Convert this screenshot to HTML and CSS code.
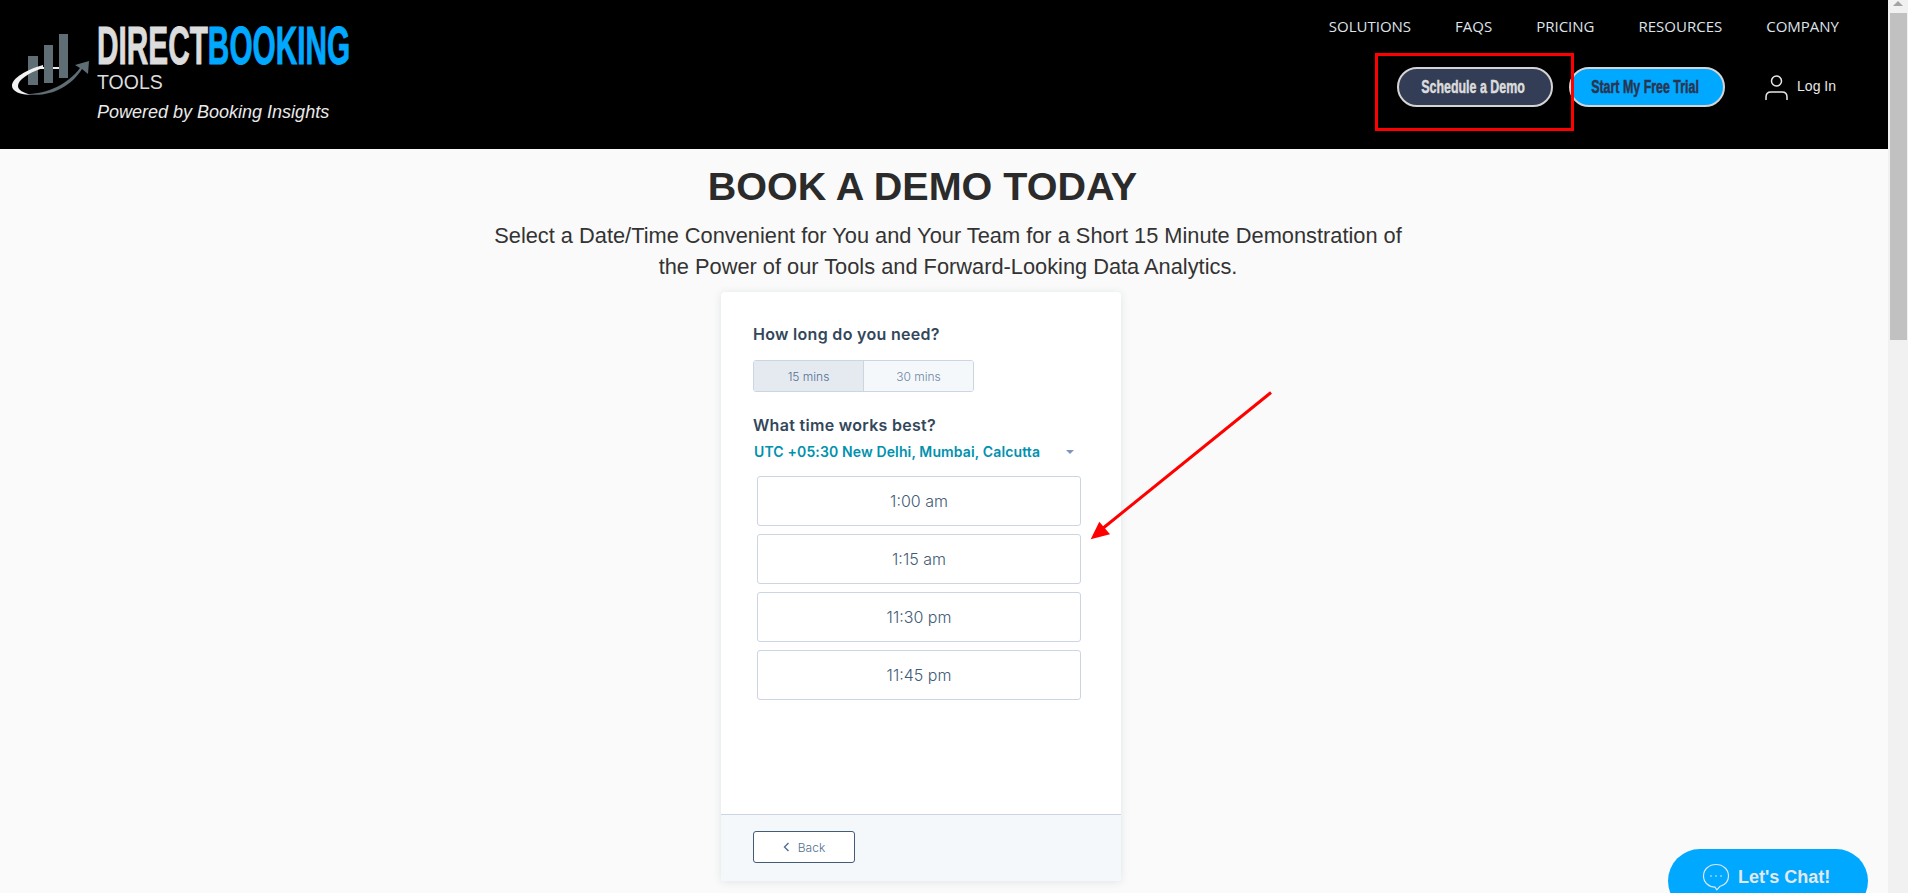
FILE: index.html
```html
<!DOCTYPE html>
<html lang="en">
<head>
  <meta charset="UTF-8">
  <meta name="viewport" content="width=device-width, initial-scale=1.0">
  <title>Book a Demo - Direct Booking Tools</title>
  <link rel="stylesheet" href="styles.css">
</head>
<body>
  <div class="page">
    <header class="site-header">
      <a href="#" class="brand">
        <svg class="brand-mark" width="97" height="90" viewBox="0 0 97 90">
          <path d="M28 46h10v29H28zM44 35h9v38h-9zM59 24h9v44h-9z" fill="#5f6d75"/>
          <path d="M38 57h6v2h-6zM53 57h6v2h-6z" fill="#eee"/>
          <path d="M43 55C26 60 12 68 12 76c0 5 8 9 20 9-9-2-14-5-14-9 0-6 10-13 25-18z" fill="#f2f2f2"/>
          <path d="M26 84c22 4 44-6 56-25l6 5 1-13-14 4 5 3C68 74 48 84 26 84z" fill="#5f6d75"/>
        </svg>
        <div class="brand-text">
          <div class="wordmark">DIRECT<span class="wordmark-blue">BOOKING</span></div>
          <div class="brand-sub">TOOLS</div>
          <div class="brand-tag">Powered by Booking Insights</div>
        </div>
      </a>
      <div class="header-right">
        <nav class="main-nav">
          <a href="#">SOLUTIONS</a>
          <a href="#">FAQS</a>
          <a href="#">PRICING</a>
          <a href="#">RESOURCES</a>
          <a href="#">COMPANY</a>
        </nav>
        <div class="header-actions">
          <a href="#" class="pill pill-dark"><span>Schedule a Demo</span></a>
          <a href="#" class="pill pill-blue"><span>Start My Free Trial</span></a>
          <a href="#" class="login">
            <svg width="23" height="25" viewBox="0 0 23 25" fill="none" stroke="#e8e8e8" stroke-width="1.5">
              <circle cx="11.500" cy="6" r="5"/>
              <path d="M1 25v-3c0-3 2-5 5-5h11c3 0 5 2 5 5v3"/>
            </svg>
            <span>Log In</span>
          </a>
        </div>
      </div>
    </header>

    <main class="content">
      <h1>BOOK A DEMO TODAY</h1>
      <p class="intro">Select a Date/Time Convenient for You and Your Team for a Short 15 Minute Demonstration of the Power of our Tools and Forward-Looking Data Analytics.</p>

      <section class="card">
        <div class="card-body">
          <h2 class="card-label">How long do you need?</h2>
          <div class="toggle">
            <button class="toggle-item active">15 mins</button>
            <button class="toggle-item">30 mins</button>
          </div>
          <h2 class="card-label time-label">What time works best?</h2>
          <div class="timezone">
            <span>UTC +05:30 New Delhi, Mumbai, Calcutta</span>
            <i class="caret"></i>
          </div>
          <div class="slots">
            <button class="slot">1:00 am</button>
            <button class="slot">1:15 am</button>
            <button class="slot">11:30 pm</button>
            <button class="slot">11:45 pm</button>
          </div>
        </div>
        <div class="card-footer">
          <button class="back-btn">
            <svg width="7" height="10" viewBox="0 0 7 10" fill="none" stroke="#516f90" stroke-width="1.4"><path d="M5.500 1 1.500 5l4 4"/></svg>
            Back
          </button>
        </div>
      </section>
    </main>

    <a href="#" class="chat-btn">
      <svg width="28" height="28" viewBox="0 0 28 28" fill="none" stroke="#dfe6ec" stroke-width="1.2">
        <path d="M14 1.500C7 1.500 1.500 6.500 1.500 13S7 24 13 24.200l1.800 2.600 3-3.300C23 22 26.500 18 26.500 13 26.500 6.500 21 1.500 14 1.500z"/>
        <path d="M8.500 13h1M13.500 13h1M18.500 13h1" stroke-width="1.800"/>
      </svg>
      Let's Chat!
    </a>

    <!-- annotations drawn over the screenshot -->
    <div class="mark-box"></div>
    <svg class="mark-arrow" width="190" height="155" viewBox="0 0 190 155">
      <path d="M184 1.500 15 138" stroke="#f00" stroke-width="3" fill="none"/>
      <path d="M3.700 148.300 12.300 130.700 23 143.300z" fill="#f00"/>
    </svg>
  </div>

  <div class="scrollbar">
    <div class="scroll-up"></div>
    <div class="scroll-thumb"></div>
  </div>
</body>
</html>
```

FILE: styles.css
```css
* {
  box-sizing: border-box;
}
html, body {
  height: 100%;
}
body {
  margin: 0;
  display: flex;
  overflow: hidden;
  background-color: #fafafa;
  font-family: 'Liberation Sans', Arial, sans-serif;
  color: #2b2b2b;
}
a {
  text-decoration: none;
}
.page {
  position: relative;
  flex: 1;
  min-width: 0;
  height: 100%;
  overflow: hidden;
}

/* header */
.site-header {
  height: 149px;
  background-color: #000;
  display: flex;
  justify-content: space-between;
}
.brand {
  display: flex;
}
.brand-mark {
  margin-top: 10px;
  flex-shrink: 0;
}
.brand-text {
  padding-top: 27px;
}
.wordmark {
  font-size: 53px;
  line-height: 38px;
  font-weight: bold;
  color: #dcdcdc;
  white-space: nowrap;
  width: 252px;
  -webkit-text-stroke: 1px currentColor;
  transform: scaleX(0.562);
  transform-origin: left;
}
.wordmark-blue {
  color: #00a8ff;
}
.brand-sub {
  margin-top: 6px;
  font-size: 19.500px;
  line-height: 22px;
  color: #dcdcdc;
}
.brand-tag {
  margin-top: 8px;
  font-size: 18px;
  line-height: 22px;
  font-style: italic;
  color: #eaeaea;
  white-space: nowrap;
}
.header-right {
  padding-right: 49px;
  display: flex;
  flex-direction: column;
  align-items: flex-end;
}
.main-nav {
  display: flex;
  gap: 44px;
  margin-top: 16px;
}
.main-nav a {
  font-family: 'Open Sans', sans-serif;
  font-size: 15px;
  line-height: 20px;
  color: #dfe3e8;
}
.header-actions {
  display: flex;
  align-items: center;
  margin-top: 31px;
}
.pill {
  width: 156px;
  height: 40px;
  padding-right: 4px;
  border: 2px solid #d4d4d4;
  border-radius: 20px;
  display: flex;
  align-items: center;
  justify-content: center;
  font-size: 18px;
  font-weight: bold;
  white-space: nowrap;
}
.pill span {
  display: inline-block;
  -webkit-text-stroke: 0.5px currentColor;
  transform: scaleX(0.69);
}
.pill-dark {
  background-color: #333d55;
  color: #dcdcdc;
}
.pill-blue {
  margin-left: 16px;
  background-color: #00a8ff;
  color: #2b3550;
}
.login {
  display: flex;
  align-items: flex-start;
  gap: 9px;
  margin-left: 40px;
  margin-right: 3px;
  color: #e8e8e8;
  font-size: 14px;
  line-height: 20px;
  white-space: nowrap;
}
.login span {
  margin-top: 1px;
}

/* main */
.content {
  display: flex;
  flex-direction: column;
  align-items: center;
  width: 1842px;
}
.content h1 {
  margin: 15px 0 0 3px;
  font-size: 39.500px;
  line-height: 45px;
  font-weight: bold;
  color: #2b2b2b;
}
.intro {
  margin: 11px 0 0 54px;
  width: 920px;
  font-size: 21.800px;
  line-height: 31px;
  text-align: center;
  color: #333;
}

/* card */
.card {
  margin-top: 10px;
  width: 400px;
  height: 589px;
  background-color: #fff;
  border-radius: 4px;
  box-shadow: 0 1px 8px rgba(45, 62, 80, 0.12);
  display: flex;
  flex-direction: column;
  font-family: Inter, sans-serif;
  overflow: hidden;
}
.card-body {
  flex: 1;
  padding: 32px 32px 0;
}
.card-label {
  margin: 0;
  font-size: 16px;
  line-height: 20px;
  font-weight: 600;
  color: #33475b;
  letter-spacing: 0.3px;
}
.toggle {
  display: flex;
  margin-top: 16px;
  width: 221px;
  height: 32px;
  border: 1px solid #cbd6e2;
  border-radius: 3px;
  overflow: hidden;
}
.toggle-item {
  flex: 1;
  border: 0;
  background-color: #f5f8fa;
  font-family: Inter, sans-serif;
  font-size: 12px;
  font-weight: 300;
  color: #6b87a6;
}
.toggle-item.active {
  background-color: #e5eaf1;
  border-right: 1px solid #cbd6e2;
  color: #516f90;
}
.time-label {
  margin-top: 23px;
}
.timezone {
  display: flex;
  align-items: center;
  justify-content: space-between;
  margin-top: 7px;
  padding: 0 15px 0 1px;
  font-size: 14px;
  line-height: 20px;
  font-weight: 600;
  letter-spacing: 0.13px;
  color: #0091ae;
}
.caret {
  width: 0;
  height: 0;
  border-left: 4px solid transparent;
  border-right: 4px solid transparent;
  border-top: 4px solid #7c98b6;
}
.slots {
  display: flex;
  flex-direction: column;
  gap: 8px;
  margin: 14px 0 0 4px;
  width: 324px;
}
.slot {
  height: 50px;
  background-color: #fff;
  border: 1px solid #cbd6e2;
  border-radius: 3px;
  font-family: Inter, sans-serif;
  font-size: 16px;
  font-weight: 300;
  color: #425b76;
}
.card-footer {
  height: 67px;
  padding: 16px 32px;
  background-color: #f5f8fa;
  border-top: 1px solid #cbd6e2;
}
.back-btn {
  width: 102px;
  height: 32px;
  background-color: #fff;
  border: 1px solid #425b76;
  border-radius: 3px;
  display: flex;
  align-items: center;
  justify-content: center;
  gap: 8px;
  font-family: Inter, sans-serif;
  font-size: 12px;
  font-weight: 300;
  color: #516f90;
}

/* chat */
.chat-btn {
  position: absolute;
  left: 1668px;
  top: 849px;
  width: 200px;
  height: 64px;
  border-radius: 32px;
  background-color: #00a8ff;
  color: #e4e8ec;
  font-size: 18px;
  font-weight: bold;
  display: flex;
  align-items: flex-start;
  gap: 8px;
  padding: 14px 0 0 34px;
  line-height: 28px;
}

/* annotations */
.mark-box {
  position: absolute;
  left: 1375px;
  top: 53px;
  width: 199px;
  height: 78px;
  border: 3px solid #f00;
}
.mark-arrow {
  position: absolute;
  left: 1087px;
  top: 391px;
}

/* scrollbar */
.scrollbar {
  width: 20px;
  flex-shrink: 0;
  height: 100%;
  background-color: #f1f1f1;
}
.scroll-up {
  height: 13px;
  position: relative;
}
.scroll-up::after {
  content: '';
  position: absolute;
  left: 5px;
  top: 1px;
  border-left: 5px solid transparent;
  border-right: 5px solid transparent;
  border-bottom: 5px solid #a3a3a3;
}
.scroll-thumb {
  margin: 0 1px 0 2px;
  height: 327px;
  background-color: #c1c1c1;
}
```
